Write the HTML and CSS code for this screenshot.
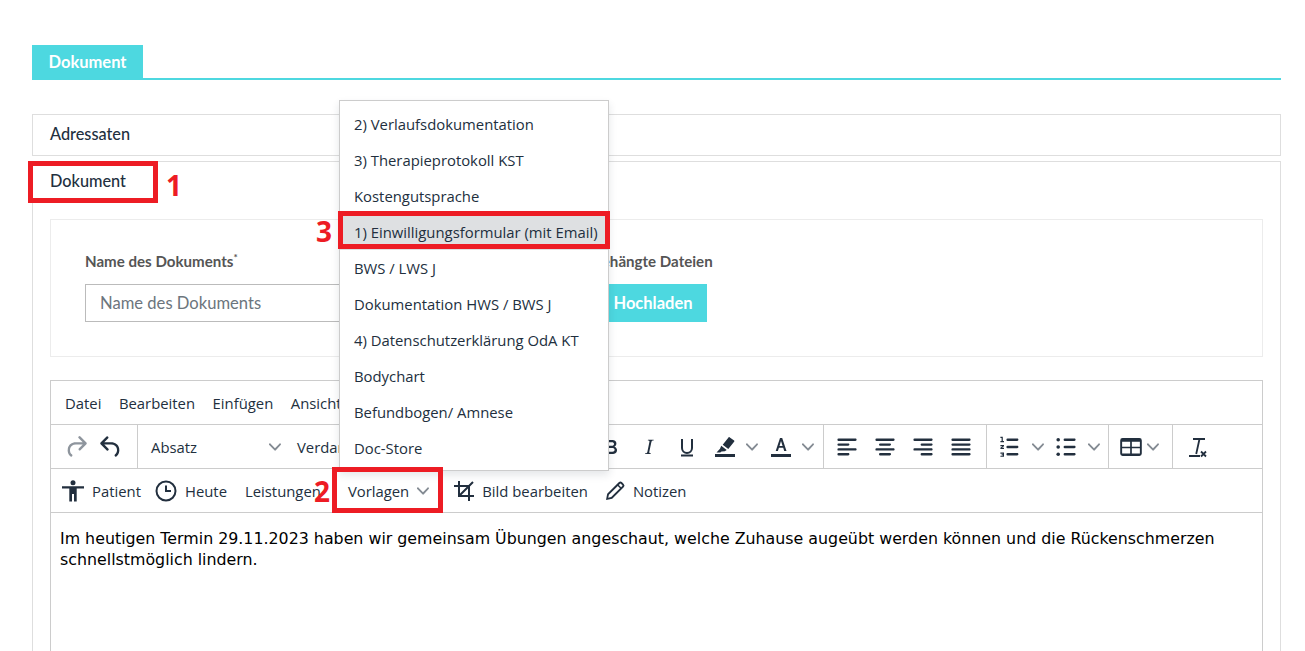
FILE: index.html
```html
<!DOCTYPE html>
<html lang="de">
<head>
    <meta charset="UTF-8">
    <meta name="viewport" content="width=device-width, initial-scale=1.0">
    <title>Dokument</title>
    <link rel="stylesheet" href="styles.css">
</head>
<body>
    <svg class="defs" width="0" height="0">
        <symbol id="chev" viewBox="0 0 10 10"><path d="M8.7 2.2c.3-.3.8-.3 1 0 .4.4.4.9 0 1.2L5.7 7.8c-.3.3-.9.3-1.2 0L.2 3.4a.8.8 0 0 1 0-1.2c.3-.3.8-.3 1.1 0L5 6l3.7-3.8z"/></symbol>
    </svg>

    <div class="seite">
        <!-- Reiter -->
        <div class="reiter"><span class="reiter-aktiv">Dokument</span></div>

        <div class="karte karte-zu">Adressaten</div>

        <div class="karte">
            <div class="karte-kopf">Dokument</div>
            <div class="karte-inhalt">
                <div class="formular">
                    <div class="feld">
                        <label>Name des Dokuments<sup>*</sup></label>
                        <input type="text" placeholder="Name des Dokuments">
                    </div>
                    <div class="feld">
                        <label>Angehängte Dateien</label>
                        <button class="hochladen">Hochladen</button>
                    </div>
                </div>

                <!-- Editor -->
                <div class="editor">
                    <div class="menue">
                        <span>Datei</span><span>Bearbeiten</span><span>Einfügen</span><span>Ansicht</span>
                    </div>
                    <div class="werkzeuge">
                        <div class="gruppe g-verlauf">
                            <svg class="ic" viewBox="2 2 20 20"><path class="blass" d="M17.6 10H12c-2.8 0-4.4 1.4-4.9 3.5-.4 2 .3 4 1.4 4.6a1 1 0 1 1-1 1.8c-2-1.2-2.9-4.1-2.3-6.8.6-3 3-5.1 6.8-5.1h5.6l-3.3-3.3a1 1 0 1 1 1.4-1.4l5 5a1 1 0 0 1 0 1.4l-5 5a1 1 0 0 1-1.4-1.4l3.3-3.3z"/></svg>
                            <svg class="ic" viewBox="2 2 20 20"><path d="M6.4 8H12c3.7 0 6.2 2 6.8 5.1.6 2.7-.4 5.6-2.3 6.8a1 1 0 0 1-1-1.8c1.1-.7 1.8-2.7 1.4-4.6-.5-2.1-2.1-3.5-4.9-3.5H6.4l3.3 3.3a1 1 0 1 1-1.4 1.4l-5-5a1 1 0 0 1 0-1.4l5-5a1 1 0 0 1 1.4 1.4L6.4 8z"/></svg>
                        </div>
                        <div class="gruppe g-format">
                            <span class="auswahl">Absatz<svg class="chev"><use href="#chev"/></svg></span>
                            <span class="schrift">Verdana</span>
                        </div>
                        <div class="gruppe g-stil">
                            <svg class="ic" viewBox="0 0 24 24"><path d="M7.8 19c-.3 0-.5 0-.6-.2l-.2-.5V5.7c0-.2 0-.4.2-.5l.6-.2h5c1.500 0 2.700.3 3.500 1 .7.600 1.100 1.400 1.100 2.500a3 3 0 0 1-.6 1.900c-.4.6-1 1-1.600 1.200.4.100.9.300 1.300.600s.8.700 1 1.200c.4.400.500 1 .500 1.600 0 1.300-.4 2.300-1.300 3-.8.700-2.100 1-3.800 1H7.800zm5-8.300c.6 0 1.200-.1 1.600-.5.4-.3.600-.7.600-1.300 0-1.100-.8-1.700-2.300-1.700H9.300v3.500h3.400zm.5 6c.7 0 1.300-.1 1.700-.4.4-.4.600-.9.600-1.500s-.2-1-.7-1.400c-.4-.3-1-.4-2-.4H9.400v3.800h4z"/></svg>
                            <svg class="ic" viewBox="0 0 24 24"><path d="M16.700 4.700l-.1.900h-.3c-.6 0-1 0-1.400.3-.3.300-.4.600-.5 1.100l-2.100 9.800v.6c0 .5.400.8 1.400.8h.2l-.2.800H8l.2-.8h.2c1.100 0 1.800-.5 2-1.500l2-9.800.1-.5c0-.6-.4-.8-1.400-.8h-.3l.2-.9h5.800z"/></svg>
                            <svg class="ic" viewBox="0 0 24 24"><path class="linie" d="M7 4v9a5 5 0 0 0 10 0V4M6 20.500h12"/></svg>
                            <svg class="ic" viewBox="0 0 24 24"><path d="M2 19h20v3H2z"/><path d="M16.500 2.200l4.600 3.400c.4.300.4.700.2 1l-6 7.400-5.600-4.200 5.800-7.400c.3-.3.700-.4 1-.2zM8.200 10.800l5.500 4.100-1.900 1.400-3.300.1-1.200 1.100H3.500l3.500-3.700z"/></svg>
                            <svg class="chev c1"><use href="#chev"/></svg>
                            <svg class="ic" viewBox="0 0 24 24"><path d="M2 19h20v3H2z"/><path d="M11 3h2.200l4.300 13h-2.300l-1-3.200H9.900L8.900 16H6.700zm-.5 8h3.100L12 5.900z"/></svg>
                            <svg class="chev c2"><use href="#chev"/></svg>
                        </div>
                        <div class="gruppe g-ausrichten">
                            <svg class="ic" viewBox="2 2 20 20"><path d="M5 5h14c.6 0 1 .4 1 1s-.4 1-1 1H5a1 1 0 1 1 0-2zm0 4h8c.6 0 1 .4 1 1s-.4 1-1 1H5a1 1 0 1 1 0-2zm0 8h8c.6 0 1 .4 1 1s-.4 1-1 1H5a1 1 0 0 1 0-2zm0-4h14c.6 0 1 .4 1 1s-.4 1-1 1H5a1 1 0 0 1 0-2z"/></svg>
                            <svg class="ic" viewBox="2 2 20 20"><path d="M5 5h14c.6 0 1 .4 1 1s-.4 1-1 1H5a1 1 0 1 1 0-2zm3 4h8c.6 0 1 .4 1 1s-.4 1-1 1H8a1 1 0 1 1 0-2zm0 8h8c.6 0 1 .4 1 1s-.4 1-1 1H8a1 1 0 0 1 0-2zm-3-4h14c.6 0 1 .4 1 1s-.4 1-1 1H5a1 1 0 0 1 0-2z"/></svg>
                            <svg class="ic" viewBox="2 2 20 20"><path d="M5 5h14c.6 0 1 .4 1 1s-.4 1-1 1H5a1 1 0 1 1 0-2zm6 4h8c.6 0 1 .4 1 1s-.4 1-1 1h-8a1 1 0 0 1 0-2zm0 8h8c.6 0 1 .4 1 1s-.4 1-1 1h-8a1 1 0 0 1 0-2zm-6-4h14c.6 0 1 .4 1 1s-.4 1-1 1H5a1 1 0 0 1 0-2z"/></svg>
                            <svg class="ic" viewBox="2 2 20 20"><path d="M5 5h14c.6 0 1 .4 1 1s-.4 1-1 1H5a1 1 0 1 1 0-2zm0 4h14c.6 0 1 .4 1 1s-.4 1-1 1H5a1 1 0 1 1 0-2zm0 4h14c.6 0 1 .4 1 1s-.4 1-1 1H5a1 1 0 0 1 0-2zm0 4h14c.6 0 1 .4 1 1s-.4 1-1 1H5a1 1 0 0 1 0-2z"/></svg>
                        </div>
                        <div class="gruppe g-listen">
                            <svg class="ic" viewBox="2 2 20 20"><path d="M10 17h8c.6 0 1 .4 1 1s-.4 1-1 1h-8a1 1 0 0 1 0-2zm0-6h8c.6 0 1 .4 1 1s-.4 1-1 1h-8a1 1 0 0 1 0-2zm0-6h8c.6 0 1 .4 1 1s-.4 1-1 1h-8a1 1 0 1 1 0-2z"/><path d="M6 3.500v3.500h1v1H4V7h1V4.600H4v-1.100zM4 10.300h3v1l-1.700 1.300H7v1H4v-1l1.700-1.300H4zM4 16.500h3v3.700H4v-1h2v-.4H5v-.8h1v-.4H4z"/></svg>
                            <svg class="chev"><use href="#chev"/></svg>
                            <svg class="ic" viewBox="2 2 20 20"><path d="M11 5h8c.6 0 1 .4 1 1s-.4 1-1 1h-8a1 1 0 0 1 0-2zm0 6h8c.6 0 1 .4 1 1s-.4 1-1 1h-8a1 1 0 0 1 0-2zm0 6h8c.6 0 1 .4 1 1s-.4 1-1 1h-8a1 1 0 0 1 0-2z"/><circle cx="5.500" cy="6" r="1.500"/><circle cx="5.500" cy="12" r="1.500"/><circle cx="5.500" cy="18" r="1.500"/></svg>
                            <svg class="chev"><use href="#chev"/></svg>
                        </div>
                        <div class="gruppe g-tabelle">
                            <svg class="ic" viewBox="2 2 20 20"><path fill-rule="evenodd" d="M5 4.500h14a2 2 0 0 1 2 2v11a2 2 0 0 1-2 2H5a2 2 0 0 1-2-2v-11a2 2 0 0 1 2-2zM4.600 7.700v4h6.700v-4zm8.100 0v4h6.700v-4zm-8.100 5.400v4.400h6.700v-4.400zm8.100 0v4.400h6.700v-4.400z"/></svg>
                            <svg class="chev"><use href="#chev"/></svg>
                        </div>
                        <div class="gruppe g-loeschen">
                            <svg class="ic" viewBox="0 0 24 24"><path class="linie duenn" d="M8 4h12M14.500 4l-3.300 15M4 21h11"/><path class="linie duenn" d="M16 16.500l5 5M21 16.500l-5 5"/></svg>
                        </div>
                    </div>
                    <div class="werkzeuge zusatz">
                        <span class="knopf k-patient"><svg class="ic" viewBox="0 0 24 24"><circle cx="12" cy="3.800" r="2.500"/><path d="M1 7.300h22v2.300h-7.300v12.900h-2.700v-7.500h-2v7.500H8.300V9.600H1z"/></svg>Patient</span>
                        <span class="knopf k-heute"><svg class="ic" viewBox="0 0 24 24"><circle cx="12" cy="12" r="9.500" fill="none" stroke="currentColor" stroke-width="2"/><path d="M11 6.500h2V11h4v2h-6z"/></svg>Heute</span>
                        <span class="knopf k-leistungen">Leistungen</span>
                        <span class="knopf k-vorlagen">Vorlagen<svg class="chev"><use href="#chev"/></svg></span>
                        <span class="knopf k-bild"><svg class="ic" viewBox="0 0 24 24"><path class="linie" d="M7 2v15h15M2 7h15v15M21 3L7 17"/></svg>Bild bearbeiten</span>
                        <span class="knopf k-notizen"><svg class="ic" viewBox="0 0 24 24"><path d="M15.700 3.300a2.400 2.400 0 0 1 3.400 0l1.600 1.600a2.400 2.400 0 0 1 0 3.400L9.200 19.800 3 21l1.200-6.200zM14.800 7l-8.900 8.800-.7 3 3-.7 8.800-8.900zm1-1.100l2.300 2.300 1.200-1.200a.5.500 0 0 0 0-.8l-1.500-1.500a.5.500 0 0 0-.8 0z"/></svg>Notizen</span>
                    </div>
                    <div class="text">
                        Im heutigen Termin 29.11.2023 haben wir gemeinsam Übungen angeschaut, welche Zuhause augeübt werden können und die Rückenschmerzen schnellstmöglich lindern.
                    </div>
                </div>
            </div>
        </div>

        <!-- Aufgeklapptes Menue -->
        <ul class="vorlagen-liste">
            <li>2) Verlaufsdokumentation</li>
            <li>3) Therapieprotokoll KST</li>
            <li>Kostengutsprache</li>
            <li class="markiert">1) Einwilligungsformular (mit Email)</li>
            <li>BWS / LWS J</li>
            <li>Dokumentation HWS / BWS J</li>
            <li>4) Datenschutzerklärung OdA KT</li>
            <li>Bodychart</li>
            <li>Befundbogen/ Amnese</li>
            <li>Doc-Store</li>
        </ul>

        <!-- Markierungen -->
        <div class="rahmen r1"></div>
        <div class="rahmen r2"></div>
        <div class="rahmen r3"></div>
        <span class="nummer n1">1</span>
        <span class="nummer n2">2</span>
        <span class="nummer n3">3</span>
    </div>
</body>
</html>
```

FILE: styles.css
```css
:root {
    --tuerkis: #4dd8e0;
    --linie: #dedede;
    --linie-editor: #ccc;
    --text: #222f3e;
    --rot: #ed1c24;
}

body {
    margin: 0;
    background: #fff;
    color: var(--text);
    font-family: "Open Sans", Arial, sans-serif;
    font-size: 14.85px;
}

.defs {
    position: absolute;
}

.seite {
    position: relative;
    height: 651px;
    overflow: hidden;
    padding: 45px 24px 0 32px;
    box-sizing: border-box;
}

/* Reiter */
.reiter {
    border-bottom: 2px solid var(--tuerkis);
    height: 33px;
    margin-bottom: 34px;
}

.reiter-aktiv {
    display: inline-block;
    width: 111px;
    height: 33px;
    line-height: 34px;
    text-align: center;
    background: var(--tuerkis);
    color: #fff;
    font-family: Lato, Arial, sans-serif;
    font-weight: 700;
    font-size: 16.5px;
}

/* Karten */
.karte {
    border: 1px solid var(--linie);
    margin-bottom: 5px;
    font-family: Lato, Arial, sans-serif;
    font-size: 16.3px;
    font-weight: 500;
}

.karte-zu,
.karte-kopf {
    height: 40px;
    line-height: 38px;
    padding-left: 17px;
}

.karte-inhalt {
    padding: 17px 17px 0;
}

.formular {
    display: grid;
    grid-template-columns: 490px 1fr;
    height: 138px;
    padding: 31px 34px 0;
    box-sizing: border-box;
    border: 1px solid #ececec;
    margin-bottom: 23px;
}

.feld label {
    display: block;
    color: #555;
    font-weight: 700;
    font-size: 15.1px;
    line-height: 20px;
    margin-bottom: 13px;
}

.feld sup {
    font-size: 10px;
    line-height: 0;
}

.feld input {
    width: 440px;
    height: 38px;
    box-sizing: border-box;
    border: 1px solid #bbb;
    padding: 0 14px;
    font-family: Lato, Arial, sans-serif;
    font-size: 16.6px;
}

.feld input::placeholder {
    color: #6c757d;
    opacity: 1;
}

.hochladen {
    height: 38px;
    width: 108px;
    margin-left: 24px;
    border: none;
    background: var(--tuerkis);
    color: #fff;
    font-family: Lato, Arial, sans-serif;
    font-weight: 700;
    font-size: 16.5px;
}

/* Editor */
.editor {
    border: 1px solid var(--linie-editor);
    height: 400px;
    font-family: "Open Sans", Arial, sans-serif;
    font-size: 14.85px;
    font-weight: 400;
}

.menue {
    display: flex;
    gap: 17.5px;
    height: 43px;
    align-items: center;
    padding-left: 14px;
    border-bottom: 1px solid var(--linie-editor);
}

.werkzeuge {
    display: flex;
    align-items: center;
    height: 43px;
    border-bottom: 1px solid var(--linie-editor);
}

.gruppe {
    display: flex;
    align-items: center;
    height: 100%;
    border-right: 1px solid var(--linie-editor);
    box-sizing: border-box;
}

.gruppe:last-child {
    border-right: none;
}

.ic {
    width: 24px;
    height: 24px;
    flex: none;
    fill: currentColor;
}

.blass {
    fill: #8e959d;
}

.linie {
    fill: none;
    stroke: currentColor;
    stroke-width: 2;
}

.duenn {
    stroke-width: 1.8;
}

.chev {
    width: 12px;
    height: 12px;
    flex: none;
    fill: #848b93;
}

.g-verlauf {
    flex: 0 0 87px;
    padding-left: 13px;
    gap: 11px;
}

.g-format {
    flex: 0 0 346px;
    padding-left: 13px;
}

.auswahl {
    display: flex;
    align-items: center;
    justify-content: space-between;
    width: 130px;
    margin-right: 16px;
}

.g-stil {
    flex: 0 0 340px;
    justify-content: flex-end;
    gap: 14px;
    padding-right: 9px;
}

.g-stil .c1 {
    margin-left: -5px;
    margin-right: -3px;
}

.g-stil .c2 {
    margin-left: -5px;
}

.g-ausrichten {
    flex: 0 0 163px;
    gap: 14px;
    padding-left: 11px;
}

.g-listen {
    flex: 0 0 122px;
    gap: 10px;
    padding-left: 11px;
}

.g-tabelle {
    flex: 0 0 64px;
    gap: 4px;
    padding-left: 10px;
}

.g-loeschen {
    padding-left: 12px;
}

.zusatz {
    padding-left: 10px;
}

.knopf {
    display: flex;
    align-items: center;
    gap: 7px;
}

.k-heute {
    margin-left: 13px;
}

.k-leistungen {
    margin-left: 18px;
}

.k-vorlagen {
    margin-left: 27px;
    gap: 8px;
}

.k-bild {
    margin-left: 23px;
    gap: 6px;
}

.k-notizen {
    margin-left: 15px;
    gap: 6px;
}

.text {
    padding: 15px 9px;
    font-family: "DejaVu Sans", Verdana, sans-serif;
    font-size: 15.83px;
    line-height: 21px;
    color: #000;
}

/* Menue ueber dem Editor */
.vorlagen-liste {
    position: absolute;
    left: 339px;
    top: 100px;
    width: 270px;
    height: 371px;
    box-sizing: border-box;
    margin: 0;
    padding: 5px 0;
    list-style: none;
    background: #fff;
    border: 1px solid var(--linie-editor);
    box-shadow: 0 4px 8px rgba(34, 47, 62, 0.12);
}

.vorlagen-liste li {
    height: 36px;
    line-height: 36px;
    padding-left: 14px;
}

.vorlagen-liste .markiert {
    background: #dee0e2;
}

/* Markierungen */
.rahmen {
    position: absolute;
    box-sizing: border-box;
    border: 5px solid var(--rot);
}

.r1 {
    left: 28px;
    top: 161px;
    width: 130px;
    height: 42px;
}

.r2 {
    left: 332px;
    top: 467px;
    width: 111px;
    height: 46px;
}

.r3 {
    left: 338px;
    top: 211px;
    width: 272px;
    height: 38px;
}

.nummer {
    position: absolute;
    color: var(--rot);
    font-family: "Open Sans", Arial, sans-serif;
    font-weight: 700;
    font-size: 28px;
    line-height: 32px;
}

.n1 {
    left: 166px;
    top: 169px;
}

.n2 {
    left: 314px;
    top: 475px;
}

.n3 {
    left: 316px;
    top: 215px;
}
```
